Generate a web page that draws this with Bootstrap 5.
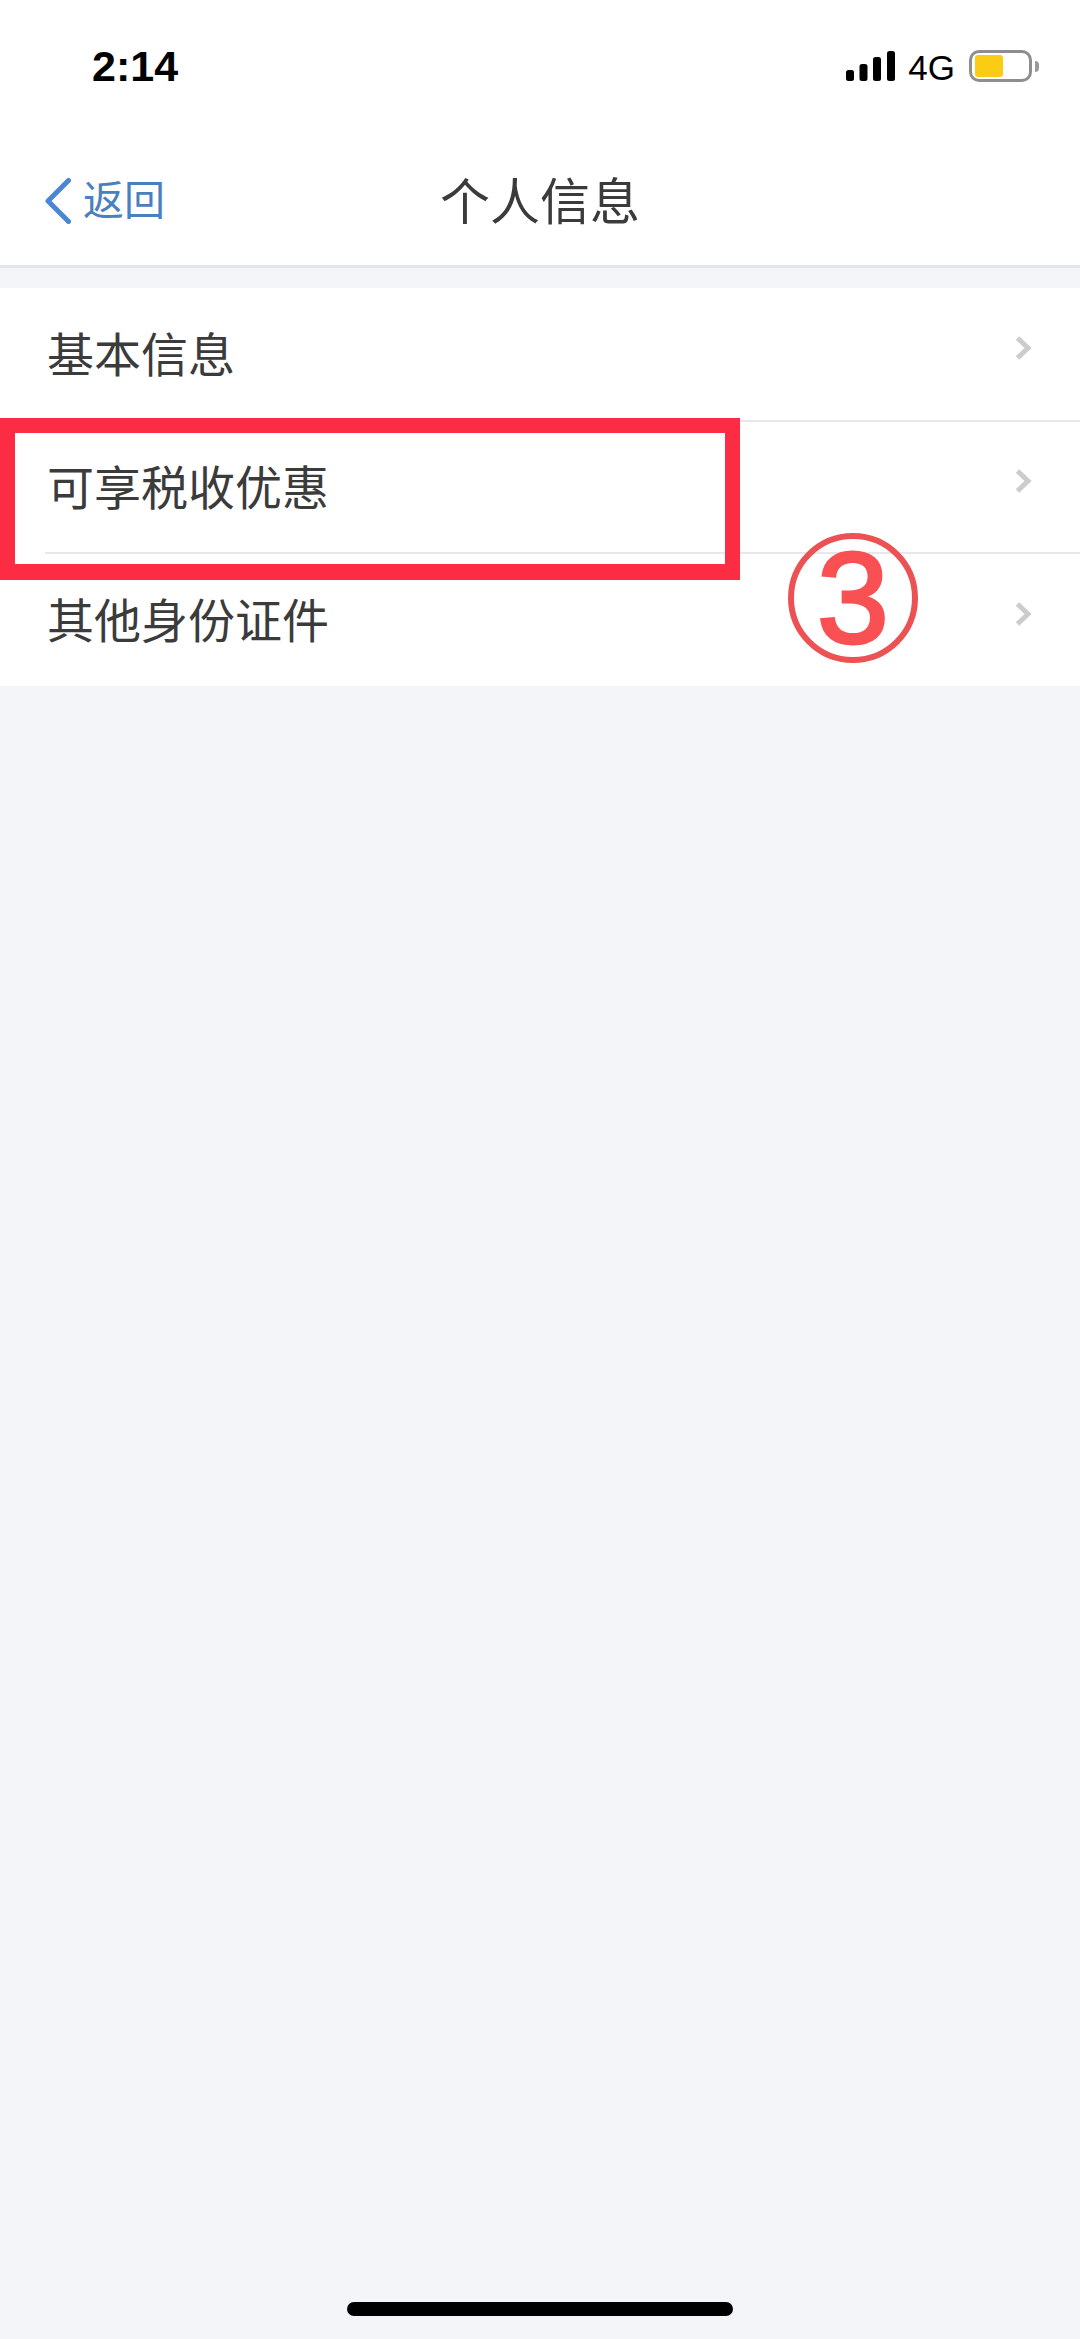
<!DOCTYPE html>
<html lang="zh">
<head>
  <meta charset="utf-8">
  <title>个人信息</title>
  <link rel="stylesheet" href="https://cdn.jsdelivr.net/npm/bootstrap@5.3.0/dist/css/bootstrap.min.css">
  <style>
    body { background: #f4f5f9; font-family: "Liberation Sans", "Noto Sans CJK SC", sans-serif; }
    .screen { height: 2339px; }

    /* header */
    .app-head { background: #fff; border-bottom: 3px solid #e4e5ea; }
    .status-row { height: 132px; padding: 0 41px 0 92px; }
    .clock { font-size: 43px; font-weight: 700; line-height: 1; color: #000; }
    .net-label { font-size: 35px; line-height: 1; color: #000; margin: 3px 14px 0 13px; }
    .batt-body { width: 63px; height: 32px; border: 3px solid #8e8e8e; border-radius: 10px; padding: 2px 3px; }
    .batt-fill { width: 28px; height: 100%; background: #fbcc14; border-radius: 3px; }
    .batt-nub { width: 4px; height: 11px; background: #999; border-radius: 0 4px 4px 0; margin-left: 3px; }
    .title-row { height: 133px; padding: 5px 45px 0; display: grid; grid-template-columns: 1fr auto 1fr; align-items: center; }
    .back-link { color: #4a80bd; font-size: 41px; line-height: 1; gap: 12px; text-decoration: none; }
    .page-title { font-size: 50px; line-height: 1; font-weight: 400; color: #3b3b3b; margin: 0; padding-top: 3px; }

    /* list */
    .info-list { margin-top: 20px; border-radius: 0; }
    .info-item { padding: 0 0 0 45px; border: 0; background: #fff; font-size: 47px; color: #3b3b3b; }
    .info-inner { height: 132px; padding-right: 48px; border-bottom: 2px solid #e8e8ec; }
    .info-item:first-child .info-inner { height: 134px; }
    .info-item:last-child .info-inner { border-bottom: 0; }
    .info-label { padding: 4px 0 0 2px; }
    .info-arrow { margin-bottom: 12px; }

    /* annotations laid over the list */
    .mark-box { left: 0; top: 418px; width: 740px; height: 162px; border: 15px solid #fb2c44; border-bottom-width: 16px; }
    .mark-num { left: 788px; top: 533px; width: 130px; height: 130px; border: 6px solid #ec5254; border-radius: 50%; color: #f85053; font-size: 130px; line-height: 1; -webkit-text-stroke: 3px #f85053; }

    .home-bar { width: 386px; height: 14px; background: #000; border-radius: 7px; margin-bottom: 23px; }
  </style>
</head>
<body>
  <div class="screen position-relative d-flex flex-column overflow-hidden">
    <header class="app-head">
      <div class="status-row d-flex align-items-center justify-content-between">
        <span class="clock">2:14</span>
        <div class="d-flex align-items-center">
          <svg width="49" height="30" viewBox="0 0 49 30" fill="#000">
            <rect x="0" y="19" width="8" height="11" rx="2.5"/>
            <rect x="13.5" y="13" width="8" height="17" rx="2.5"/>
            <rect x="27" y="6" width="8" height="24" rx="2.5"/>
            <rect x="41" y="0" width="8" height="30" rx="2.5"/>
          </svg>
          <span class="net-label">4G</span>
          <div class="batt-body"><div class="batt-fill"></div></div>
          <div class="batt-nub"></div>
        </div>
      </div>
      <div class="title-row">
        <a href="#" class="back-link d-flex align-items-center">
          <svg width="26" height="46" viewBox="0 0 26 46" fill="none" stroke="#4a86d6" stroke-width="5" stroke-linecap="round" stroke-linejoin="round">
            <polyline points="23.5,2.5 3,23 23.5,43.5"/>
          </svg>
          <span>返回</span>
        </a>
        <h1 class="page-title">个人信息</h1>
        <div></div>
      </div>
    </header>

    <div class="list-group info-list">
      <div class="list-group-item info-item">
        <div class="info-inner d-flex align-items-center justify-content-between">
          <span class="info-label">基本信息</span>
          <svg class="info-arrow" width="17" height="24" viewBox="0 0 17 24" fill="none" stroke="#ccc" stroke-width="5"><polyline points="2.5,2 13,12 2.5,22"/></svg>
        </div>
      </div>
      <div class="list-group-item info-item">
        <div class="info-inner d-flex align-items-center justify-content-between">
          <span class="info-label">可享税收优惠</span>
          <svg class="info-arrow" width="17" height="24" viewBox="0 0 17 24" fill="none" stroke="#ccc" stroke-width="5"><polyline points="2.5,2 13,12 2.5,22"/></svg>
        </div>
      </div>
      <div class="list-group-item info-item">
        <div class="info-inner d-flex align-items-center justify-content-between">
          <span class="info-label">其他身份证件</span>
          <svg class="info-arrow" width="17" height="24" viewBox="0 0 17 24" fill="none" stroke="#ccc" stroke-width="5"><polyline points="2.5,2 13,12 2.5,22"/></svg>
        </div>
      </div>
    </div>

    <div class="mark-box position-absolute"></div>
    <div class="mark-num position-absolute d-flex align-items-center justify-content-center">3</div>

    <div class="home-bar mt-auto mx-auto"></div>
  </div>

  <script src="https://cdn.jsdelivr.net/npm/bootstrap@5.3.0/dist/js/bootstrap.bundle.min.js"></script>
</body>
</html>
